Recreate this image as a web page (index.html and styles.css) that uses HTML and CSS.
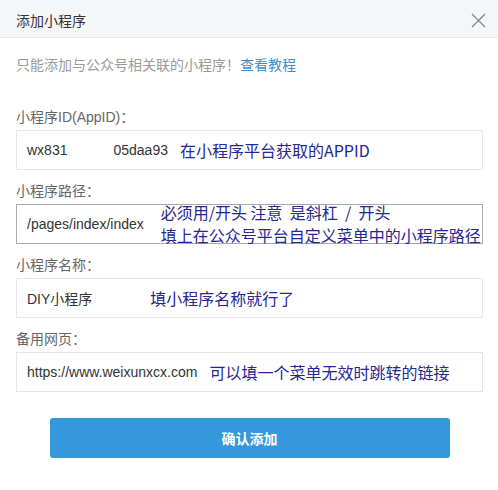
FILE: index.html
```html
<!DOCTYPE html>
<html lang="zh-CN">
<head>
    <meta charset="UTF-8">
    <meta name="viewport" content="width=device-width, initial-scale=1.0">
    <title>添加小程序</title>
    <link rel="stylesheet" href="styles.css">
</head>
<body>
    <div class="dialog">
        <div class="dialog-header">
            <span class="dialog-title">添加小程序</span>
            <span class="dialog-close">
                <svg width="15" height="15" viewBox="0 0 15 15">
                    <path d="M1 1 L14 14 M14 1 L1 14" stroke="#888" stroke-width="1.4" fill="none"/>
                </svg>
            </span>
        </div>

        <div class="dialog-body">
            <p class="tip">只能添加与公众号相关联的小程序！<a href="#" class="tip-link">查看教程</a></p>

            <div class="field">
                <div class="field-label">小程序ID(AppID)：</div>
                <div class="field-input">
                    <span class="value">wx831</span>
                    <span class="value value-rest">05daa93</span>
                    <span class="note">在小程序平台获取的APPID</span>
                </div>
            </div>

            <div class="field">
                <div class="field-label">小程序路径：</div>
                <div class="field-input field-input-active">
                    <span class="value">/pages/index/index</span>
                    <span class="note note-path">
                        <span class="note-line">必须用/开头 注意  是斜杠  /  开头</span>
                        <span class="note-line">填上在公众号平台自定义菜单中的小程序路径</span>
                    </span>
                </div>
            </div>

            <div class="field">
                <div class="field-label">小程序名称：</div>
                <div class="field-input">
                    <span class="value">DIY小程序</span>
                    <span class="note note-name">填小程序名称就行了</span>
                </div>
            </div>

            <div class="field">
                <div class="field-label">备用网页：</div>
                <div class="field-input">
                    <span class="value">https://www.weixunxcx.com</span>
                    <span class="note">可以填一个菜单无效时跳转的链接</span>
                </div>
            </div>

            <button class="btn-submit">确认添加</button>
        </div>
    </div>
</body>
</html>
```

FILE: styles.css
```css
body {
    margin: 0;
    background-color: #fff;
    font-family: "Liberation Sans", Arial, "Noto Sans CJK SC", sans-serif;
    font-size: 14px;
    color: #333;
}
.dialog {
    width: 498px;
}
.dialog-header {
    height: 37px;
    display: flex;
    align-items: center;
    justify-content: space-between;
    padding: 0 12px 0 16px;
    background-color: #f5f6f8;
    border-bottom: 1px solid #e4e5e7;
}
.dialog-title {
    font-size: 14px;
    color: #333;
    padding-top: 2px;
}
.dialog-close {
    display: flex;
    padding-top: 4px;
}
.dialog-body {
    padding: 0 15px 0 16px;
}
.tip {
    margin: 17px 0 0;
    line-height: 20px;
    color: #9a9a9a;
}
.tip-link {
    color: #3a8fd0;
    text-decoration: none;
}
.field {
    margin-top: 11px;
}
.field:first-of-type {
    margin-top: 32px;
}
.field-label {
    line-height: 20px;
    color: #666;
    margin-bottom: 3px;
}
.field-input {
    height: 38px;
    display: flex;
    align-items: center;
    padding: 0 10px;
    border: 1px solid #e6e6e6;
    background-color: #fff;
}
.field-input-active {
    border-color: #a9a9a9;
}
.value {
    color: #333;
    white-space: nowrap;
}
.value-rest {
    margin-left: 46px;
}
.note {
    margin-left: 12px;
    font-family: "Noto Sans CJK SC", sans-serif;
    font-size: 16px;
    color: #262696;
    white-space: nowrap;
}
.note-path {
    display: flex;
    flex-direction: column;
    margin-left: 17px;
}
.note-line {
    display: block;
    line-height: 23px;
    white-space: pre;
}
.note-name {
    margin-left: 58px;
}
.btn-submit {
    display: block;
    width: 400px;
    height: 40px;
    margin: 26px auto 0;
    border: none;
    border-radius: 3px;
    background-color: #3598dc;
    color: #fff;
    font-family: "Noto Sans CJK SC", sans-serif;
    font-size: 14px;
    font-weight: bold;
    cursor: pointer;
}
```
